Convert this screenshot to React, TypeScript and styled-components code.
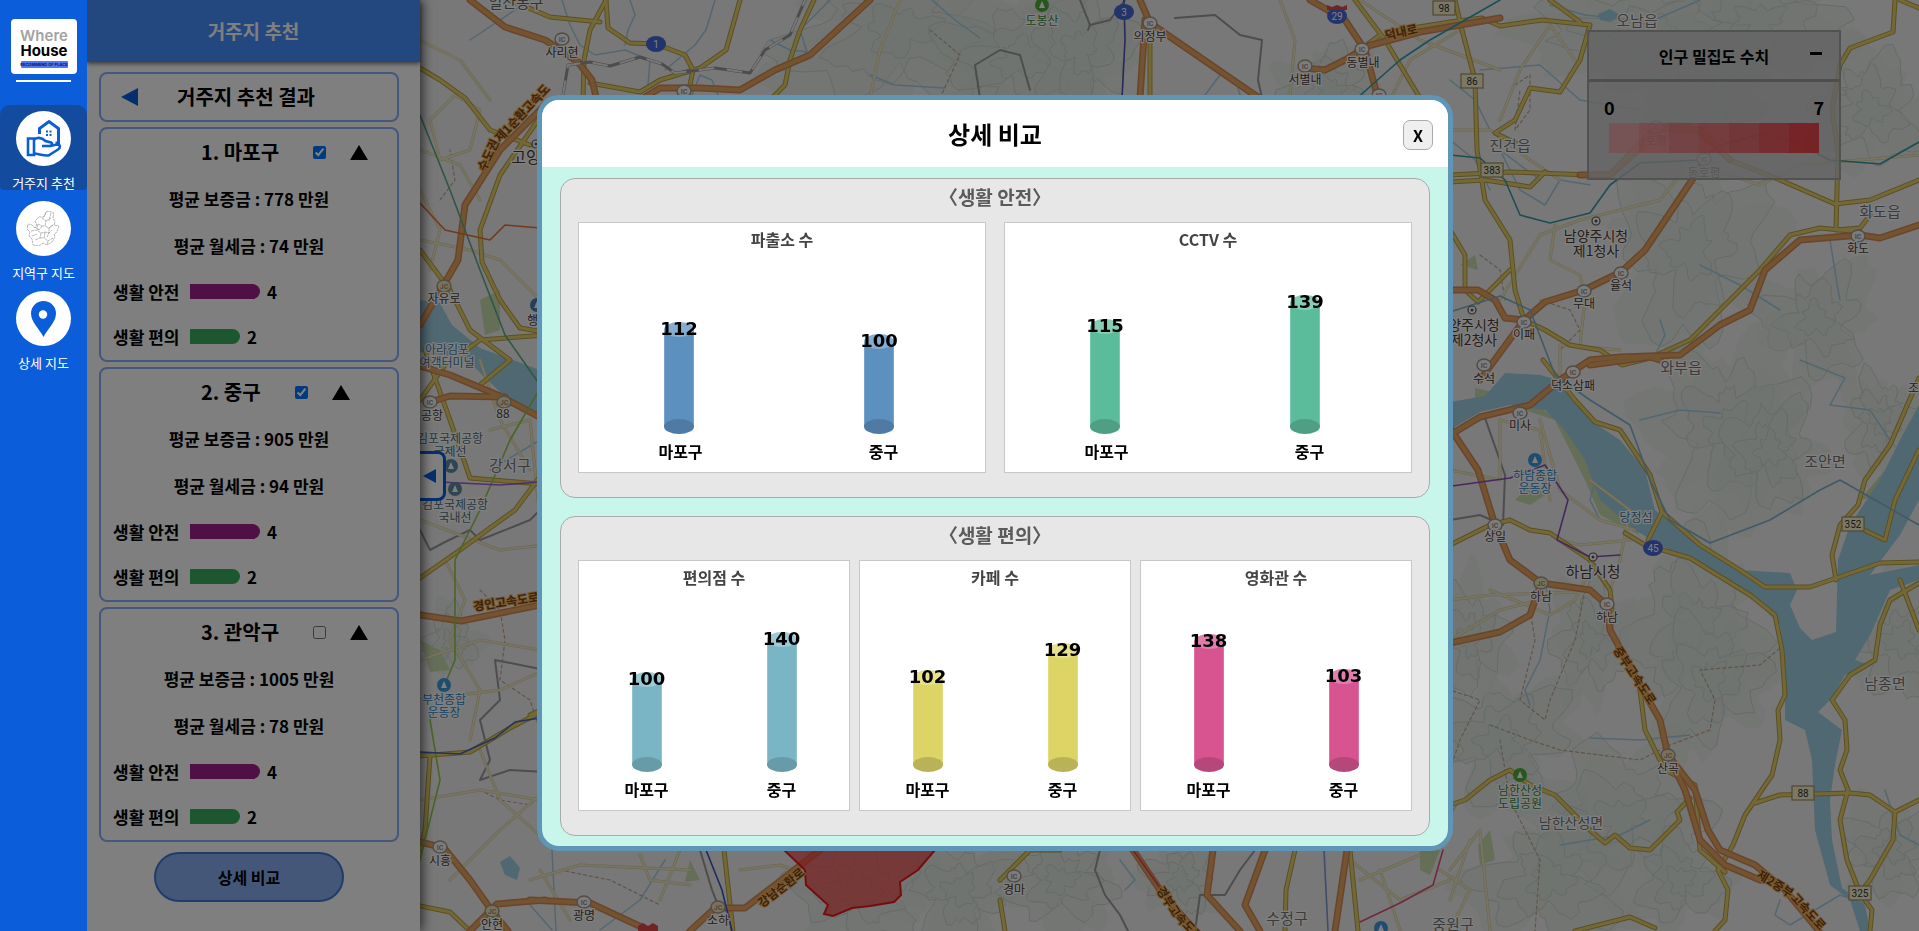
import React, { useState } from "react";
import styled, { createGlobalStyle } from "styled-components";

const GlobalStyle = createGlobalStyle`
  *, *::before, *::after { box-sizing: border-box; }
  body { margin: 0; font-family: "Noto Sans CJK KR", "Noto Sans", sans-serif; color: #000; }
  h1, h2, h3, p, ul, figure, dl, dd { margin: 0; padding: 0; }
  button { font-family: inherit; cursor: pointer; }
`;

/* ---------- page frame ---------- */

const Page = styled.div`
  position: relative;
  display: flex;
  min-height: 100vh;
  overflow: hidden;
`;

const Sidebar = styled.nav`
  position: relative;
  z-index: 20;
  flex: 0 0 87px;
  display: flex;
  flex-direction: column;
  align-items: center;
  padding-top: 19px;
  background: #0b5dda;
`;

const LogoLink = styled.a`
  display: block;
  width: 66px;
  height: 55px;
  border-radius: 4px;
  background: #fff;
`;

const Divider = styled.hr`
  width: 55px;
  height: 2px;
  margin: 6px 0 23px;
  border: 0;
  background: #fff;
`;

const NavList = styled.ul`
  width: 100%;
  display: flex;
  flex-direction: column;
  gap: 5px;
  list-style: none;
`;

const NavLink = styled.a<{ $active?: boolean }>`
  display: flex;
  flex-direction: column;
  align-items: center;
  gap: 7px;
  height: 85px;
  padding-top: 6px;
  border-radius: 10px 10px 4px 4px;
  background: ${(p) => (p.$active ? "#134c9f" : "transparent")};
  color: #fff;
  font-size: 13px;
  line-height: 20px;
  text-decoration: none;
  white-space: nowrap;
`;

const NavCircle = styled.span`
  flex: none;
  display: grid;
  place-items: center;
  width: 55px;
  height: 55px;
  border-radius: 50%;
  background: #fff;
`;

/* ---------- recommendation panel ---------- */

const Panel = styled.aside`
  position: relative;
  z-index: 5;
  flex: 0 0 333px;
  background: #fff;
  box-shadow: 3px 0 10px rgba(0, 0, 0, 0.6);
`;

const PanelHeader = styled.header`
  height: 62px;
  display: grid;
  place-items: center;
  padding-bottom: 2px;
  background: #468eff;
  box-shadow: 0 2px 4px rgba(0, 0, 0, 0.5);
`;

const PanelTitle = styled.h1`
  color: #fff;
  font-size: 19px;
  font-weight: 700;
`;

const PanelBody = styled.div`
  display: flex;
  flex-direction: column;
  gap: 5px;
  padding: 10px 21px 20px 12px;
`;

const Box = styled.section`
  border: 2px solid #88b0f8;
  border-radius: 8px;
`;

const ResultBar = styled(Box)`
  display: grid;
  grid-template-columns: 60px 1fr 66px;
  align-items: center;
  height: 50px;
`;

const BackButton = styled.button`
  justify-self: end;
  display: grid;
  padding: 0;
  margin-right: 23px;
  border: 0;
  background: none;
`;

const ResultTitle = styled.h2`
  font-size: 20px;
  font-weight: 700;
  line-height: 28px;
  text-align: center;
  white-space: nowrap;
`;

const Card = styled(Box)`
  padding-bottom: 1px;
  font-size: 17px;
  font-weight: 700;
`;

const CardHead = styled.div`
  display: flex;
  align-items: center;
  height: 46px;
  padding-left: 100px;
`;

const CardTitle = styled.label`
  font-size: 20px;
  line-height: 28px;
  white-space: nowrap;
`;

const CardCheck = styled.input`
  width: 13px;
  height: 13px;
  margin: 0 24px 0 34px;
`;

const FoldButton = styled.button`
  display: grid;
  padding: 0;
  border: 0;
  background: none;
`;

const CardText = styled.p`
  line-height: 47px;
  text-align: center;
`;

const ScoreRow = styled.div`
  display: flex;
  align-items: center;
  height: 45px;
  padding-left: 12px;
`;

const ScoreName = styled.span`
  width: 77px;
`;

const ScoreBar = styled.span<{ $color: string; $width: number }>`
  width: ${(p) => p.$width}px;
  height: 15px;
  margin-right: 7px;
  border-radius: 0 8px 8px 0;
  background: ${(p) => p.$color};
`;

const CompareButton = styled.button`
  align-self: center;
  width: 190px;
  height: 50px;
  margin-top: 5px;
  border: 2px solid #4078d0;
  border-radius: 25px;
  background: #88aef0;
  color: #000;
  font-size: 16px;
  font-weight: 700;
`;

/* ---------- map ---------- */

const MapArea = styled.main`
  position: relative;
  flex: 1;
  min-width: 0;
`;

const MapCanvas = styled.svg`
  position: absolute;
  inset: 0;
  width: 100%;
  height: 100%;
  display: block;
`;

const PanelToggle = styled.button`
  position: absolute;
  left: 0;
  top: calc(50% - 15px);
  z-index: 4;
  display: grid;
  place-items: center;
  width: 26px;
  height: 50px;
  padding: 0 4px 0 0;
  border: 3px solid #0b5dda;
  border-left: 0;
  border-radius: 0 8px 8px 0;
  background: #fff;
`;

const Legend = styled.section`
  position: absolute;
  top: 30px;
  right: 78px;
  width: 254px;
  height: 150px;
  border: 2px solid rgba(160, 160, 160, 0.9);
  background: rgba(200, 200, 200, 0.8);
`;

const LegendHead = styled.header`
  position: relative;
  display: grid;
  place-items: center;
  height: 50px;
  border-bottom: 3px solid rgba(150, 150, 150, 0.9);
`;

const LegendTitle = styled.h2`
  font-size: 16px;
  font-weight: 700;
`;

const LegendFold = styled.button`
  position: absolute;
  top: 17px;
  right: 17px;
  display: grid;
  padding: 3px 0;
  border: 0;
  background: none;
`;

const LegendBody = styled.div`
  padding: 12px 20px 0;
`;

const LegendRange = styled.div`
  display: flex;
  justify-content: space-between;
  margin: 0 -5px;
  padding-bottom: 2px;
  font-size: 18px;
  font-weight: 700;
  line-height: 27px;
`;

const LegendScale = styled.div`
  display: flex;
  height: 30px;
`;

const LegendStep = styled.span<{ $color: string }>`
  flex: 1;
  background: ${(p) => p.$color};
`;

/* ---------- comparison dialog ---------- */

const Backdrop = styled.div`
  position: fixed;
  inset: 0;
  z-index: 10;
  display: flex;
  align-items: center;
  justify-content: center;
  padding: 15px 0 0 71px;
  background: rgba(0, 0, 0, 0.5);
`;

const Dialog = styled.section`
  width: 916px;
  max-width: 90%;
  overflow: hidden;
  border: 5px solid #6095b6;
  border-radius: 22px;
  background: #c8f6ea;
`;

const DialogHead = styled.header`
  display: grid;
  grid-template-columns: 45px 1fr 45px;
  align-items: center;
  height: 67px;
  background: #fff;
`;

const DialogTitle = styled.h2`
  grid-column: 2;
  font-size: 24px;
  font-weight: 700;
  line-height: 36px;
  text-align: center;
`;

const CloseButton = styled.button`
  width: 30px;
  height: 30px;
  margin-top: 3px;
  padding: 0;
  border: 1px solid #aaa;
  border-radius: 7px;
  background: #efefef;
  color: #000;
  font-size: 16px;
  font-weight: 700;
  line-height: 24px;
`;

const DialogBody = styled.div`
  display: flex;
  flex-direction: column;
  gap: 18px;
  padding: 11px 18px 10px;
`;

const Group = styled.section`
  padding: 0 17px 24px;
  border: 1px solid #aaa;
  border-radius: 15px;
  background: #e7e7e7;
`;

const GroupTitle = styled.h3`
  margin-bottom: 7px;
  color: #5b5b5b;
  font-size: 19px;
  font-weight: 700;
  line-height: 36px;
  text-align: center;
  font-feature-settings: "halt";
`;

const ChartRow = styled.div<{ $gap: number }>`
  display: flex;
  gap: ${(p) => p.$gap}px;
`;

const ChartBox = styled.figure`
  flex: 1;
  padding-bottom: 4px;
  border: 1px solid #c8c8c8;
  background: #fff;
`;

const ChartTitle = styled.figcaption`
  color: #444;
  font-size: 16px;
  font-weight: 700;
  line-height: 32px;
  text-align: center;
`;

const Plot = styled.div<{ $inset: number }>`
  display: flex;
  align-items: flex-end;
  height: 179px;
  padding-right: ${(p) => p.$inset}px;
`;

const PlotSlot = styled.div`
  flex: 1;
  display: flex;
  justify-content: center;
`;

const Column = styled.div`
  position: relative;
  display: grid;
  justify-items: center;
  width: 30px;
`;

const ColumnValue = styled.span`
  position: absolute;
  top: -4px;
  left: 50%;
  transform: translateX(-50%);
  font-family: "DejaVu Sans", sans-serif;
  font-size: 18px;
  font-weight: 700;
  line-height: 21px;
`;

const AxisLabels = styled.div`
  display: flex;
  font-size: 16px;
  font-weight: 700;
  line-height: 34px;
  text-align: center;
`;

const AxisLabel = styled.span`
  flex: 1;
`;

/* ---------- data ---------- */

const districts = [
  { name: "1. 마포구", deposit: 778, rent: 74, checked: true },
  { name: "2. 중구", deposit: 905, rent: 94, checked: true },
  { name: "3. 관악구", deposit: 1005, rent: 78, checked: false },
];

type Tone = { body: string; top: string; base: string };
type ChartData = { title: string; values: [number, number]; tone: Tone };

const safety: ChartData[] = [
  { title: "파출소 수", values: [112, 100], tone: { body: "#5b90bf", top: "#86accf", base: "#4e7aa3" } },
  { title: "CCTV 수", values: [115, 139], tone: { body: "#5bbc9b", top: "#86cfb6", base: "#4f9f85" } },
];

const comfort: ChartData[] = [
  { title: "편의점 수", values: [100, 140], tone: { body: "#7ab5c5", top: "#9ccad5", base: "#689ba8" } },
  { title: "카페 수", values: [102, 129], tone: { body: "#ddd466", top: "#e7e08f", base: "#bab257" } },
  { title: "영화관 수", values: [138, 103], tone: { body: "#d85491", top: "#e07fae", base: "#b6477b" } },
];

const legendColors = [
  "rgba(255,140,145,.6)", "rgba(250,115,120,.62)", "rgba(240,100,104,.66)", "rgba(245,85,90,.7)",
  "rgba(235,75,80,.74)", "rgba(240,62,68,.8)", "rgba(240,50,56,.86)",
];

/* ---------- icons ---------- */

const Triangle = ({ dir, w, h, color }: { dir: "left" | "up"; w: number; h: number; color: string }) => (
  <svg width={w} height={h} viewBox="0 0 10 10" preserveAspectRatio="none" aria-hidden="true">
    <path d={dir === "left" ? "M10 0V10L0 5Z" : "M0 10H10L5 0Z"} fill={color} />
  </svg>
);

const Logo = () => (
  <svg width="66" height="55" viewBox="0 0 66 55" role="img" aria-label="Where House">
    <g fontFamily="Inter, sans-serif" fontWeight="600" fontSize="15" textAnchor="middle">
      <text x="33" y="22" fill="#a3a3a3">Where</text>
      <text x="33" y="37" fill="#000" fontWeight="700">House</text>
    </g>
    <rect x="10" y="42" width="47" height="7" rx="1" fill="#5078f5" />
    <text x="33" y="47" fontFamily="Inter, sans-serif" fontSize="4" fontWeight="700" textAnchor="middle" fill="#0b1550">
      RECOMMEND OF PLACE
    </text>
  </svg>
);

const HouseHandIcon = () => (
  <svg width="36" height="39" viewBox="0 0 36 39" fill="none" stroke="#0b5dda" strokeWidth="3" aria-hidden="true">
    <path d="M13.5 15V9.5L23 2.5L32.5 9.5V24H29.500" />
    <path d="M20 11.500h2v2h-2zM23.500 11.500h2v2h-2zM20 15h2v2h-2zM23.500 15h2v2h-2z" fill="#0b5dda" stroke="none" />
    <path d="M2 19.500H8V36H2Z" strokeWidth="2.600" />
    <path d="M8 20.500C12 18 16 18.500 19.500 22L25 23.500C27 24.500 26.500 27 24 27H16" strokeWidth="2.600" />
    <path d="M24 27L31 25.500C35 25.500 34.500 29 32 30.500L22.500 36.500C18 37 13 35 8 34.500" strokeWidth="2.600" />
  </svg>
);

const DistrictIcon = () => (
  <svg width="33" height="35" viewBox="0 0 33 35" fill="none" stroke="#8c8c8c" strokeWidth=".6" strokeDasharray="3 .6" aria-hidden="true">
    <path d="M19 1l3 -1 5 2-1 5 2 4-1 3 5 1-2 6-3 2 1 3-3 5-5 3-4-2-4 3-6-1-1-6-3-3 1-4-3-3 1-5 4 1 3 3 2-3-2-4 4-4 5 0z" />
    <path d="M15 7l4 3-1 5 4 2 4-3M11 13l4 2 3 0M8 16l4 3 3-4M4 20l6-1 4 3 4-1 4 1 3-3M22 17l0 5-2 4M14 22l-1 5-5 2M18 21l-1 6 4 3 5-3M5 25l5-2M13 27l4 0M10 13l1 6M19 10l5-3M21 30l-1 4M26 14l-4 3M19 1l-2 5M24 2l-2 8" />
  </svg>
);

const PinIcon = () => (
  <svg width="25" height="36" viewBox="0 0 25 36" aria-hidden="true">
    <path d="M12.500 0C5.500 0 0 5.500 0 12.500C0 21 8.500 28 12.500 36C16.500 28 25 21 25 12.500C25 5.500 19.500 0 12.500 0Z" fill="#0b5dda" />
    <circle cx="12" cy="13.500" r="4.200" fill="#fff" />
  </svg>
);

/* ---------- map drawing ---------- */

const water = [
  "M1450 402L1485 396L1505 373L1540 375L1565 382L1590 420L1620 440L1645 470L1655 510L1700 545L1740 570L1790 573L1797 590L1790 605L1800 628L1812 640L1836 632L1838 560L1850 525L1880 480L1900 440L1919 405V500L1900 535L1870 575L1919 565V580L1890 590L1870 635L1855 660L1870 665L1845 675L1830 700L1818 712L1842 730L1835 765L1830 800L1832 840L1842 888L1865 905L1870 931H1860L1850 900L1830 885L1815 830L1812 760L1805 730L1785 720L1785 660L1780 625L1750 595L1700 565L1660 545L1635 530L1600 500L1585 460L1565 430L1545 410L1510 405L1480 412L1450 430Z",
  "M420 300L440 303L452 325L480 348L545 372V425L500 392L465 358L420 352Z",
  "M500 862L510 856L520 868L517 880L505 875Z",
  "M1598 14L1610 9L1620 15L1611 22L1600 20Z",
];

const streams = [
  "M562 0L570 25L580 45L595 55L625 50L650 60L648 85", "M630 0L635 15L628 30L625 45", "M715 0L706 30L695 45L665 70",
  "M770 40L790 50L807 52L800 30L830 0", "M690 100L700 75L712 80L718 95", "M932 0L955 20L980 38", "M870 75L895 85L945 88",
  "M530 0L470 40", "M1205 95L1220 75L1235 78L1240 95", "M1450 80L1475 100L1490 130", "M1550 5L1585 15L1650 22L1700 0",
  "M1480 70L1540 65L1580 100L1640 110", "M1540 180L1500 150L1520 190L1545 205L1560 180L1590 185", "M1600 460L1590 500L1600 520",
  "M1700 265L1740 285L1780 310", "M1800 360L1845 378L1830 405L1870 410L1890 440", "M1640 420L1680 410L1720 413", "M1830 240L1838 290L1840 300",
  "M1540 660L1550 610L1545 580M1540 660L1525 690L1530 705", "M1590 738L1640 740L1690 735", "M1560 845L1620 835L1650 820",
  "M530 905L552 930M552 850L556 931", "M600 930L640 900L665 860", "M1120 860L1135 880L1125 890", "M1780 900L1775 915L1790 925L1840 895L1870 905",
  "M1885 790L1900 835L1919 845", "M1450 140L1475 160L1490 190", "M1660 320L1665 335L1655 355", "M490 470L540 440", "M1460 800L1440 830",
];

const railways = [
  { d: "M1355 100L1400 60L1430 40L1500 0", c: "#2f9fb4" },
  { d: "M1450 155L1480 158L1505 180L1520 215L1550 223L1590 213L1610 185L1640 163L1700 160L1720 145L1770 132L1800 145L1830 160L1880 164L1919 142", c: "#3a9aa5" },
  { d: "M1450 312L1500 296L1530 310L1555 375L1590 400L1630 425L1650 480L1670 520L1710 543L1770 520L1820 490L1840 480L1919 525", c: "#7fb4cc" },
  { d: "M420 115L450 190L480 270L505 335L540 385", c: "#5cae88" },
  { d: "M420 203L445 230L490 240L505 225L540 228", c: "#e8703a" },
  { d: "M545 380L510 440L480 510L455 560L455 660L430 720L440 780L420 860", c: "#94c850" },
  { d: "M1452 486L1510 478L1545 465L1568 500L1557 540L1590 557L1620 555", c: "#8a50b8" },
  { d: "M420 752L460 754L495 738L515 722L540 718", c: "#4a62c8" },
  { d: "M1124 0L1125 40L1122 98", c: "#4a55b0" },
  { d: "M706 850L722 890L732 931", c: "#3a55c0" },
  { d: "M1443 850L1433 885L1400 903L1360 922", c: "#e05080" },
  { d: "M1133 850L1165 895", c: "#e04050" },
  { d: "M1324 850L1328 931", c: "#8098d8" },
  { d: "M440 482L500 485L540 482", c: "#a060d0" },
];

const lightRoads = [
  "M420 40L460 60L490 100", "M430 120L455 95L480 110L470 150L440 160L430 120", "M420 150L460 165L480 200", "M900 0L880 50L870 98", "M420 240L470 250L500 260L540 300",
  "M420 190L440 230L430 270", "M480 360L500 420L530 470", "M490 430L530 420L540 520", "M420 520L500 550L545 545", "M445 560L465 600L450 640L480 690L470 740",
  "M420 660L480 640L540 650", "M420 700L500 690L545 670", "M480 750L500 800L545 840", "M420 800L480 790L540 800", "M450 880L500 830L545 790", "M530 880L580 865L690 870",
  "M640 855L650 880L690 885M680 850L660 900", "M540 870L570 920", "M740 870L780 865L800 872", "M1500 300L1540 235L1580 220L1660 200L1680 175", "M1555 225L1550 260L1580 275L1585 300L1580 345",
  "M1500 120L1520 70L1550 25L1575 60", "M1560 380L1560 345L1620 350", "M1450 470L1500 480L1500 420", "M1500 420L1540 430L1550 500", "M1540 420L1560 490L1600 520L1635 530", "M1590 480L1630 510L1620 560L1610 590",
  "M1450 600L1490 595L1580 592", "M1490 590L1550 615L1575 600L1590 570", "M1450 640L1500 610L1540 600", "M1560 540L1580 545L1630 540", "M1450 870L1480 830L1490 931", "M1450 900L1470 840", "M1350 860L1400 900L1450 880",
  "M1360 880L1420 855M1380 870L1400 930", "M1440 870L1470 890L1450 931", "M1280 0L1295 40L1290 95", "M1390 100L1410 60L1460 30", "M1360 0L1420 40L1500 70", "M1450 130L1490 130L1530 160L1560 180", "M1700 165L1760 185L1800 165L1919 155",
];

const yellowRoads = [
  "M420 68L440 80L465 98L490 130L530 145", "M583 100L584 60L590 30L606 0", "M606 0L608 28L630 43L656 44L685 55L693 70L690 85", "M740 0L726 50L700 68L660 80L640 92L590 83",
  "M510 0L550 17L600 22", "M814 0L800 30L790 60L785 85L770 100", "M545 110L500 175L480 230L482 262L500 300L520 328L545 332", "M420 250L450 290L470 330L510 360L480 385", "M420 400L445 365L480 340L545 335",
  "M425 350L450 420L470 478L540 484", "M420 578L460 550L490 528L515 510L545 470", "M420 756L470 752L510 728L545 710", "M430 756L425 830L420 850", "M530 715L545 708M420 906L450 912L470 931", "M724 850L733 931", "M1000 880L1030 850L1060 850M1000 900L1005 931", "M1295 850L1286 890L1285 931", "M1350 850L1358 931",
  "M1150 20L1150 98", "M1355 0L1385 40L1420 98", "M1455 0L1462 30L1475 80L1477 150L1485 200L1510 240L1515 290L1524 320", "M1360 50L1380 35M1400 30L1450 22L1482 18L1500 26L1542 20L1590 25L1580 60L1560 92L1530 88L1515 120L1495 133L1520 145",
  "M1450 175L1510 172L1590 175L1612 175L1640 150L1665 125L1690 125L1730 160L1780 180L1835 204L1870 200L1919 180", "M1450 182L1485 180L1530 187L1545 172", "M1895 0L1893 32L1850 48L1840 65L1832 110L1838 150L1836 230L1860 228L1870 215", "M1900 0L1919 8M1550 0L1580 22",
  "M1524 320L1545 330L1570 345L1600 350L1622 365L1650 358L1690 340L1720 310L1760 270L1790 235L1820 228L1860 232", "M1450 230L1465 255L1465 290L1478 302L1510 270", "M1543 360L1575 400L1595 422L1620 430L1650 475L1662 512L1700 545L1740 570L1765 587L1810 587L1880 563L1919 562",
  "M1625 533L1645 545L1690 558L1750 595L1775 615L1782 650L1785 695L1778 710L1780 740L1772 775L1745 815L1733 845L1718 870L1728 890L1725 920L1715 931", "M1662 512L1648 540", "M1919 378L1890 445L1865 480L1858 505L1840 525L1832 555L1836 580", "M1919 450L1895 500L1885 540L1860 528",
  "M1919 583L1890 600L1880 625L1875 660L1850 675L1832 700L1845 720L1847 750L1840 770L1848 790L1840 820L1847 860L1860 893L1872 910L1870 931", "M1755 803L1780 795L1850 793L1870 795L1895 812L1919 800M1895 812L1893 840L1870 880L1860 893",
  "M1450 545L1490 525L1510 520L1530 530L1550 533L1590 560L1610 590L1612 610", "M1450 805L1465 800L1490 780L1510 770L1530 785L1555 795L1570 810L1590 830L1605 843L1615 835L1630 848L1650 850L1670 830L1680 820L1677 812L1690 798", "M1575 931L1630 917L1655 928", "M1640 690L1645 730L1665 770L1695 785L1700 850L1725 872", "M1900 580L1919 630",
];

const orangeRoads = [
  "M470 0L505 27L545 40L578 62L592 80L598 105", "M640 100L660 88L700 88L740 90L775 70L810 55L870 0", "M545 105L500 150L465 205L458 260L443 286L420 325", "M420 366L450 375L500 396L545 420M430 402L450 396L505 397",
  "M420 615L461 621L545 604", "M420 842L444 848L470 880L492 911L508 931M545 900L497 904L470 931", "M530 900L590 903L650 931", "M690 931L715 908L745 908L775 885L820 850", "M1133 850L1160 890L1195 931", "M1213 850L1207 895L1240 931", "M1265 850L1245 905L1260 931", "M1347 850L1335 931",
  "M1140 0L1150 23L1262 100", "M1145 20L1140 98", "M1310 0L1345 20L1365 50L1378 98", "M1305 68L1325 70L1345 60L1368 46L1420 32L1500 18", "M1450 290L1478 290L1495 300L1505 318L1524 320", "M1480 380L1524 320L1545 302L1584 290L1621 272L1645 250L1692 180L1705 160",
  "M1450 435L1480 417L1530 405L1560 380L1590 360L1620 357L1680 355L1720 325L1750 310L1765 270L1800 240L1860 235L1880 238L1919 225", "M1580 175L1610 175L1645 140L1655 128L1700 130L1730 160", "M1590 365L1650 357L1660 360",
  "M1450 428L1478 470L1495 525L1510 560L1541 583L1590 590L1607 605L1610 630L1640 685L1660 720L1668 755L1695 790L1708 830L1720 850L1755 865L1785 890L1819 931", "M1668 755L1685 790L1700 840L1725 865L1760 880", "M1541 583L1530 615L1500 632L1450 643",
];

const parks = [
  "M1475 388L1530 400L1570 430L1610 490L1640 535L1600 515L1585 480L1555 420L1510 405L1475 408Z", "M1600 470L1640 520L1600 515Z", "M1515 500L1535 480L1545 495L1530 505Z", "M1478 845L1490 830L1495 860L1480 865Z", "M420 640L440 650L450 670L430 672Z",
  "M480 300L500 290L500 330L485 335Z", "M690 860L700 880L685 882Z", "M1860 500L1885 470L1885 495Z", "M1420 850L1440 850L1430 875L1420 870Z", "M1460 265L1475 255L1478 270Z",
];

const borders = [
  "M1080 0L1090 25L1110 20L1125 0M1090 25L1088 30M1175 18L1215 15L1240 35L1262 40L1258 80L1262 98", "M980 98L975 65L1000 50L1020 55L1030 90", "M545 505L530 520L480 540L470 530L445 542L430 550L420 530",
  "M1500 412L1485 418L1505 475L1503 525L1480 515L1450 520", "M1100 850L1095 870L1105 895L1120 915L1128 931", "M1255 850L1240 870L1225 895L1200 895L1195 931", "M545 670L495 660L500 700L480 720L490 760L480 780L510 770L545 772", "M700 850L712 890L720 910",
];

const dashes = [
  "M480 590L500 610L505 640L500 680L530 700L540 730", "M480 790L500 800L530 805L545 790", "M1585 590L1575 640L1550 700L1545 720L1520 700L1535 640L1530 610", "M1515 85L1530 75L1530 110L1515 130L1520 90", "M1480 255L1500 270L1505 300", "M1450 770L1460 740L1470 720L1480 700L1450 690",
  "M1490 725L1530 740L1560 750L1600 755L1640 760L1670 745L1710 730L1715 700L1700 670L1760 665L1780 648", "M1540 300L1570 310L1580 330L1560 350", "M440 200L455 180L450 150", "M560 870L610 880L660 905", "M930 30L960 55L940 98", "M1500 740L1510 800L1540 860L1535 931",
];

const hills: [number, number, number, number][] = [
  [900, 30, 130, 90], [1020, 60, 90, 70], [1080, 50, 60, 80], [1330, 90, 50, 45], [1650, 35, 120, 60], [1760, 20, 90, 60], [1870, 110, 60, 60], [1690, 250, 85, 100], [1700, 100, 60, 60], [1815, 320, 60, 60],
  [1730, 430, 80, 95], [1695, 620, 75, 90], [1770, 450, 50, 60], [1710, 680, 60, 70], [1590, 640, 40, 60], [1500, 740, 80, 70], [1620, 820, 90, 80], [1550, 880, 80, 70], [1900, 640, 60, 60], [1680, 880, 50, 50],
  [860, 890, 70, 60], [960, 890, 60, 55], [1060, 880, 60, 50], [1180, 880, 40, 40], [1470, 640, 40, 60], [450, 640, 30, 35], [1890, 850, 50, 50], [1880, 420, 40, 50],
];

const contour = (cx: number, cy: number, rx: number, ry: number, seed: number) => {
  const count = 56;
  const points: string[] = [];
  for (let i = 0; i < count; i += 1) {
    const angle = (i / count) * Math.PI * 2;
    const noise = Math.sin(seed * 12.9 + i * 78.2) * 43758.5;
    const lobes = Math.sin(angle * 3 + seed) * 0.2 + Math.sin(angle * 7 + seed * 2) * 0.16;
    const jag = 0.7 + (noise - Math.floor(noise)) * 0.16 + lobes;
    points.push(`${(cx + Math.cos(angle) * rx * jag).toFixed(1)} ${(cy + Math.sin(angle) * ry * jag).toFixed(1)}`);
  }
  return `M${points.join("L")}Z`;
};

type Place = { x: number; y: number; lines: string[]; size?: number; color?: string };

const places: Place[] = [
  { x: 516, y: 8, lines: ["일산동구"], size: 15, color: "#666" },
  { x: 562, y: 57, lines: ["사리현"] },
  { x: 1042, y: 25, lines: ["도봉산"], color: "#3c8a38" },
  { x: 1150, y: 41, lines: ["의정부"] },
  { x: 1305, y: 84, lines: ["서별내"] },
  { x: 1363, y: 67, lines: ["동별내"] },
  { x: 1637, y: 26, lines: ["오남읍"], size: 15, color: "#777" },
  { x: 1510, y: 151, lines: ["진건읍"], size: 15, color: "#777" },
  { x: 1596, y: 241, lines: ["남양주시청", "제1청사"], size: 14 },
  { x: 1474, y: 330, lines: ["양주시청", "제2청사"], size: 14 },
  { x: 1880, y: 217, lines: ["화도읍"], size: 15, color: "#777" },
  { x: 1858, y: 253, lines: ["화도"] },
  { x: 1621, y: 290, lines: ["율석"] },
  { x: 1584, y: 308, lines: ["무대"] },
  { x: 1524, y: 339, lines: ["이패"] },
  { x: 1484, y: 383, lines: ["수석"] },
  { x: 1573, y: 390, lines: ["덕소삼패"] },
  { x: 1681, y: 373, lines: ["와부읍"], size: 15, color: "#777" },
  { x: 1520, y: 430, lines: ["미사"] },
  { x: 1535, y: 480, lines: ["하남종합", "운동장"], color: "#2f86c8" },
  { x: 1825, y: 467, lines: ["조안면"], size: 15, color: "#777" },
  { x: 1636, y: 522, lines: ["당정섬"], color: "#4a7a9a" },
  { x: 1495, y: 541, lines: ["상일"] },
  { x: 1593, y: 577, lines: ["하남시청"], size: 15 },
  { x: 1541, y: 601, lines: ["하남"] },
  { x: 1607, y: 622, lines: ["하남"] },
  { x: 1668, y: 773, lines: ["산곡"] },
  { x: 1885, y: 689, lines: ["남종면"], size: 15, color: "#777" },
  { x: 1520, y: 795, lines: ["남한산성", "도립공원"], color: "#3c8a38" },
  { x: 1571, y: 828, lines: ["남한산성면"], size: 14, color: "#777" },
  { x: 1453, y: 930, lines: ["중원구"], size: 15, color: "#777" },
  { x: 1287, y: 924, lines: ["수정구"], size: 15, color: "#777" },
  { x: 1014, y: 894, lines: ["경마"] },
  { x: 718, y: 925, lines: ["소하"] },
  { x: 584, y: 920, lines: ["광명"] },
  { x: 492, y: 929, lines: ["안현"] },
  { x: 440, y: 865, lines: ["시흥"] },
  { x: 444, y: 704, lines: ["부천종합", "운동장"], color: "#2f86c8" },
  { x: 526, y: 163, lines: ["고양"], size: 16 },
  { x: 444, y: 303, lines: ["자유로"] },
  { x: 447, y: 354, lines: ["아라김포", "여객터미널"], color: "#4a7a9a" },
  { x: 538, y: 325, lines: ["행주"] },
  { x: 432, y: 420, lines: ["공항"] },
  { x: 503, y: 418, lines: ["88"] },
  { x: 450, y: 443, lines: ["김포국제공항", "국제선"], color: "#4a6f80" },
  { x: 510, y: 471, lines: ["강서구"], size: 15, color: "#777" },
  { x: 455, y: 509, lines: ["김포국제공항", "국내선"], color: "#4a6f80" },
  { x: 1656, y: 145, lines: ["호평"] },
  { x: 1704, y: 177, lines: ["동호평"] },
  { x: 1919, y: 393, lines: ["조안"] },
];

const junctions: [number, number, string][] = [
  [562, 39, "IC"], [684, 91, "IC"], [444, 286, "JC"], [504, 402, "JC"], [430, 402, "IC"], [1150, 23, "IC"], [1305, 66, "IC"], [1362, 49, "IC"], [1379, 95, "IC"], [1621, 273, "IC"], [1584, 291, "IC"],
  [1524, 322, "IC"], [1484, 365, "IC"], [1573, 372, "IC"], [1858, 236, "IC"], [1520, 413, "IC"], [1495, 525, "IC"], [1541, 583, "JC"], [1607, 604, "IC"], [1668, 755, "JC"], [1014, 876, "IC"],
  [718, 907, "JC"], [584, 902, "IC"], [492, 911, "JC"], [440, 847, "IC"], [1656, 127, "IC"], [1704, 159, "IC"],
];

const shields: [number, number, string][] = [
  [1444, 8, "98"], [1472, 81, "86"], [1492, 170, "383"], [1853, 524, "352"], [1803, 793, "88"], [1860, 893, "325"],
];

const badges: [number, number, string][] = [[656, 44, "1"], [1124, 12, "3"], [1337, 16, "29"], [1653, 548, "45"]];

const pois: [number, number, string][] = [
  [1535, 460, "#3f9be0"], [444, 685, "#3f9be0"], [1381, 928, "#3f9be0"], [1520, 775, "#4fae3c"], [1042, 5, "#4fae3c"], [451, 466, "#5c8ca4"], [455, 489, "#5c8ca4"], [537, 305, "#4a7fb0"],
];

const highwayNames = [
  { id: "hw-west", d: "M485 172L498 145L552 88", text: "수도권제1순환고속도로" },
  { id: "hw-gyeongin", d: "M474 611L560 598", text: "경인고속도로" },
  { id: "hw-gangnam", d: "M762 908L816 866", text: "강남순환로" },
  { id: "hw-gyeongbu", d: "M1156 890L1172 915L1200 945", text: "경부고속도로" },
  { id: "hw-jungbu", d: "M1613 650L1655 714", text: "중부고속도로" },
  { id: "hw-jungbu2", d: "M1756 877L1790 898L1830 942", text: "제2중부고속도로" },
  { id: "hw-deongnae", d: "M1386 40L1440 28", text: "덕내로" },
];

const MapDrawing = () => (
  <MapCanvas viewBox="420 0 1499 931" preserveAspectRatio="xMinYMin slice" role="img" aria-label="지도">
    <rect x="420" width="1499" height="931" fill="#f1f0f0" />
    {hills.map(([x, y, rx, ry], i) => (
      <g key={i} fill="#e0e8e2" fillOpacity=".5" stroke="#cbd6ce" strokeWidth="1">
        <path d={contour(x, y, rx * 1.2, ry * 1.2, i + 1)} stroke="none" />
        {[1, 0.65, 0.32].map((k, j) => (
          <path key={k} d={contour(x, y, rx * k, ry * k, i * 4 + j)} />
        ))}
      </g>
    ))}
    {parks.map((d) => <path key={d} d={d} fill="#cbdcae" />)}
    {water.map((d) => <path key={d} d={d} fill="#a0d0e2" />)}
    <g fill="none" strokeLinejoin="round" strokeLinecap="round">
      {streams.map((d) => <path key={d} d={d} stroke="#a5cfe2" strokeWidth="1.500" />)}
      {dashes.map((d) => <path key={d} d={d} stroke="#c0a890" strokeWidth="1.200" strokeDasharray="3 3" />)}
      {borders.map((d) => <path key={d} d={d} stroke="#9a9a9a" strokeWidth="2" />)}
      {lightRoads.map((d) => <path key={d} d={d} stroke="#cfcba4" strokeWidth="3" />)}
      {lightRoads.map((d) => <path key={d} d={d} stroke="#efeac4" strokeWidth="2" />)}
      {yellowRoads.map((d) => <path key={d} d={d} stroke="#b89f40" strokeWidth="5" />)}
      {yellowRoads.map((d) => <path key={d} d={d} stroke="#e6d270" strokeWidth="3" />)}
      {orangeRoads.map((d) => <path key={d} d={d} stroke="#d48858" strokeWidth="7" />)}
      {orangeRoads.map((d) => <path key={d} d={d} stroke="#e6a860" strokeWidth="4" />)}
      {railways.map((r) => <path key={r.d} d={r.d} stroke={r.c} strokeWidth="1.600" />)}
      <g strokeWidth="3">
        <path d="M563 95L568 65L590 62L610 66L640 57L662 64L675 73L715 68L750 73L765 50L790 35L805 0" stroke="#999" />
        <path d="M563 95L568 65L590 62L610 66L640 57L662 64L675 73L715 68L750 73L765 50L790 35L805 0" stroke="#eee" strokeWidth="2" strokeDasharray="14 14" />
      </g>
    </g>
    <path
      d="M750 780L785 851L805 870L806 885L828 905L824 914L833 916L852 908L870 906L894 902L901 895L900 882L918 870L935 850L960 780Z"
      fill="#f04040" fillOpacity=".7" stroke="#e81c1c" strokeWidth="2"
    />
    <path d="M638 931V926L643 923L648 926L653 923L658 926V931Z" fill="#e04848" />
    {shields.map(([x, y, label]) => (
      <g key={label}>
        <rect x={x - 11} y={y - 7} width="22" height="14" fill="#f6f0cc" stroke="#a08f60" strokeWidth="1.200" />
        <text x={x} y={y + 4} fontSize="10" textAnchor="middle" fontFamily="Roboto, sans-serif" fill="#333">{label}</text>
      </g>
    ))}
    {badges.map(([x, y, label]) => (
      <g key={label}>
        <ellipse cx={x} cy={y} rx="10" ry="8" fill="#4668d8" />
        {label === "29" && <path d="M1327 10V5L1332 7L1337 5L1342 7L1347 5V10Z" fill="#e04848" />}
        <text x={x} y={y + 4} fontSize="10" textAnchor="middle" fontFamily="Roboto, sans-serif" fill="#fff">{label}</text>
      </g>
    ))}
    {junctions.map(([x, y, label]) => (
      <g key={`${x}-${y}`}>
        <ellipse cx={x} cy={y} rx="7" ry="6" fill={label === "JC" ? "#efe5b0" : "#f8f8f8"} stroke="#a5998a" strokeWidth="1.500" />
        <text x={x} y={y + 3} fontSize="7" fontWeight="700" textAnchor="middle" fontFamily="Roboto, sans-serif" fill="#9a8f84">{label}</text>
      </g>
    ))}
    {pois.map(([x, y, fill]) => (
      <g key={`${x}-${y}`}>
        <circle cx={x} cy={y} r="7" fill={fill} />
        <path d={`M${x - 3} ${y + 3}H${x + 3}L${x} ${y - 4}Z`} fill="#fff" />
      </g>
    ))}
    {[[1596, 221], [1472, 310], [1593, 557], [536, 144]].map(([x, y]) => (
      <g key={x}>
        <circle cx={x} cy={y} r="4" fill="#fff" stroke="#555" strokeWidth="1.200" />
        <circle cx={x} cy={y} r="1.500" fill="#555" />
      </g>
    ))}
    <g textAnchor="middle" stroke="#fff" strokeWidth="2.500" strokeLinejoin="round" paintOrder="stroke">
      {places.map((p) => (
        <text key={`${p.x}-${p.y}`} fontSize={p.size ?? 12} fill={p.color ?? "#4c3c34"}>
          {p.lines.map((line, i) => (
            <tspan key={line} x={p.x} y={p.y + i * ((p.size ?? 12) + 1)}>{line}</tspan>
          ))}
        </text>
      ))}
    </g>
    <g fontSize="12" fontWeight="700" fill="#7c4418" stroke="#f3b65c" strokeWidth="2" paintOrder="stroke">
      {highwayNames.map((h) => (
        <g key={h.id}>
          <path id={h.id} d={h.d} fill="none" stroke="none" />
          <text><textPath href={`#${h.id}`}>{h.text}</textPath></text>
        </g>
      ))}
    </g>
  </MapCanvas>
);

/* ---------- composed parts ---------- */

const Cylinder = ({ value, tone }: { value: number; tone: Tone }) => (
  <Column>
    <svg width="30" height={value} viewBox={`0 0 30 ${value}`} aria-hidden="true">
      <rect y="7.500" width="30" height={value - 15} fill={tone.top} />
      <rect x="0.700" y="7.500" width="28.600" height={value - 15} fill={tone.body} />
      <ellipse cx="15" cy="7.500" rx="15" ry="7.500" fill={tone.top} />
      <ellipse cx="15" cy={value - 7.5} rx="15" ry="7.500" fill={tone.base} />
    </svg>
    <ColumnValue>{value}</ColumnValue>
  </Column>
);

const Chart = ({ data, inset }: { data: ChartData; inset: number }) => (
  <ChartBox>
    <ChartTitle>{data.title}</ChartTitle>
    <Plot $inset={inset}>
      {data.values.map((v) => (
        <PlotSlot key={v}><Cylinder value={v} tone={data.tone} /></PlotSlot>
      ))}
    </Plot>
    <AxisLabels>
      <AxisLabel>마포구</AxisLabel>
      <AxisLabel>중구</AxisLabel>
    </AxisLabels>
  </ChartBox>
);

const DistrictCard = ({ item, index }: { item: (typeof districts)[number]; index: number }) => {
  const [checked, setChecked] = useState(item.checked);
  const id = `district-${index}`;
  return (
    <Card>
      <CardHead>
        <CardTitle htmlFor={id}>{item.name}</CardTitle>
        <CardCheck id={id} type="checkbox" checked={checked} onChange={(e) => setChecked(e.target.checked)} />
        <FoldButton type="button" aria-label="접기"><Triangle dir="up" w={18} h={15} color="#000" /></FoldButton>
      </CardHead>
      <CardText>평균 보증금 : {item.deposit} 만원</CardText>
      <CardText>평균 월세금 : {item.rent} 만원</CardText>
      <ScoreRow><ScoreName>생활 안전</ScoreName><ScoreBar $color="#a32088" $width={70} />4</ScoreRow>
      <ScoreRow><ScoreName>생활 편의</ScoreName><ScoreBar $color="#3aae5e" $width={50} />2</ScoreRow>
    </Card>
  );
};

export default function App() {
  const [open, setOpen] = useState(true);
  return (
    <Page>
      <GlobalStyle />
      <Sidebar>
        <LogoLink href="#home"><Logo /></LogoLink>
        <Divider />
        <NavList>
          <li><NavLink href="#recommend" $active><NavCircle><HouseHandIcon /></NavCircle>거주지 추천</NavLink></li>
          <li><NavLink href="#districts"><NavCircle><DistrictIcon /></NavCircle>지역구 지도</NavLink></li>
          <li><NavLink href="#detail"><NavCircle><PinIcon /></NavCircle>상세 지도</NavLink></li>
        </NavList>
      </Sidebar>

      <Panel>
        <PanelHeader><PanelTitle>거주지 추천</PanelTitle></PanelHeader>
        <PanelBody>
          <ResultBar>
            <BackButton type="button" aria-label="뒤로"><Triangle dir="left" w={17} h={18} color="#0b5dda" /></BackButton>
            <ResultTitle>거주지 추천 결과</ResultTitle>
          </ResultBar>
          {districts.map((d, i) => <DistrictCard key={d.name} item={d} index={i} />)}
          <CompareButton type="button" onClick={() => setOpen(true)}>상세 비교</CompareButton>
        </PanelBody>
      </Panel>

      <MapArea>
        <MapDrawing />
        <PanelToggle type="button" aria-label="패널 닫기"><Triangle dir="left" w={13} h={14} color="#0b5dda" /></PanelToggle>
        <Legend>
          <LegendHead>
            <LegendTitle>인구 밀집도 수치</LegendTitle>
            <LegendFold type="button" aria-label="범례 접기">
              <svg width="12" height="3" aria-hidden="true"><rect width="12" height="3" /></svg>
            </LegendFold>
          </LegendHead>
          <LegendBody>
            <LegendRange><span>0</span><span>7</span></LegendRange>
            <LegendScale>{legendColors.map((c) => <LegendStep key={c} $color={c} />)}</LegendScale>
          </LegendBody>
        </Legend>
      </MapArea>

      {open && (
        <Backdrop>
          <Dialog role="dialog" aria-modal="true" aria-labelledby="dialog-title">
            <DialogHead>
              <DialogTitle id="dialog-title">상세 비교</DialogTitle>
              <CloseButton type="button" aria-label="닫기" onClick={() => setOpen(false)}>X</CloseButton>
            </DialogHead>
            <DialogBody>
              <Group>
                <GroupTitle>〈생활 안전〉</GroupTitle>
                <ChartRow $gap={18}>{safety.map((c) => <Chart key={c.title} data={c} inset={6} />)}</ChartRow>
              </Group>
              <Group>
                <GroupTitle>〈생활 편의〉</GroupTitle>
                <ChartRow $gap={9}>{comfort.map((c) => <Chart key={c.title} data={c} inset={0} />)}</ChartRow>
              </Group>
            </DialogBody>
          </Dialog>
        </Backdrop>
      )}
    </Page>
  );
}
